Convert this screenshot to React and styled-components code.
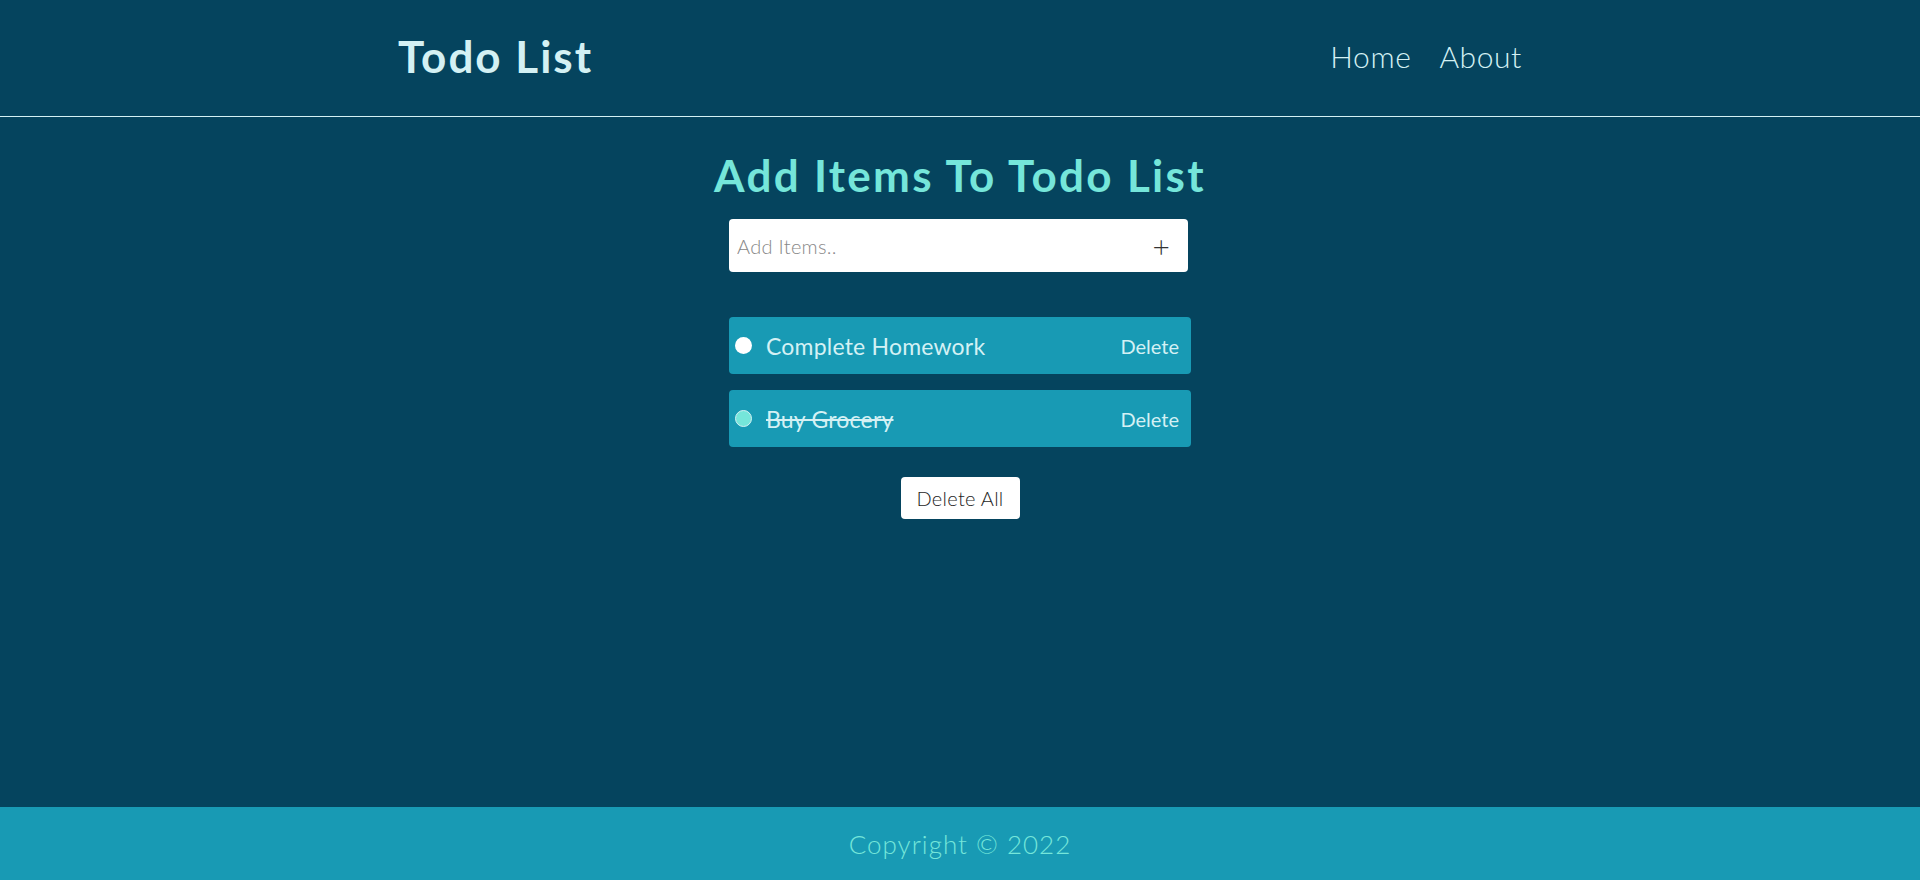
import styled, { createGlobalStyle } from 'styled-components';

const GlobalStyle = createGlobalStyle`
  html, body {
    margin: 0;
    padding: 0;
    background: #05445e;
    font-family: 'Lato', 'Noto Sans', sans-serif;
  }
  * {
    box-sizing: border-box;
  }
`;

const Page = styled.div`
  min-height: 100vh;
  display: flex;
  flex-direction: column;
  background: #05445e;
`;

const Header = styled.header`
  height: 117px;
  border-bottom: 1px solid #d4f1f4;
`;

const Container = styled.div`
  width: 1140px;
  height: 100%;
  margin: 0 auto;
  padding: 0 8px 4px 8px;
  display: flex;
  align-items: center;
  justify-content: space-between;
`;

const Brand = styled.h1`
  margin: 0;
  font-size: 44px;
  font-weight: 700;
  color: #d4f1f4;
  letter-spacing: 2px;
`;

const Nav = styled.nav`
  display: flex;
  gap: 28px;
`;

const NavLink = styled.a`
  font-size: 30px;
  font-weight: 300;
  color: #d4f1f4;
  text-decoration: none;
  letter-spacing: 0.6px;
`;

const Main = styled.main`
  flex: 1;
  display: flex;
  flex-direction: column;
  align-items: center;
  padding-top: 32px;
`;

const Title = styled.h2`
  margin: 0 0 18px;
  font-size: 44px;
  font-weight: 700;
  color: #75e6da;
  letter-spacing: 2.3px;
`;

const InputBox = styled.div`
  width: 459px;
  height: 53px;
  background: #fff;
  border-radius: 4px;
  display: flex;
  align-items: center;
  padding: 0 18px 0 6px;
  margin-left: -3px;
`;

const Input = styled.input`
  flex: 1;
  border: none;
  outline: none;
  font-family: inherit;
  font-size: 20px;
  font-weight: 300;
  color: #333;
  letter-spacing: 0.3px;
  &::placeholder {
    color: #888;
  }
`;

const AddButton = styled.button`
  border: none;
  background: none;
  padding: 0;
  font-family: inherit;
  font-size: 30px;
  font-weight: 300;
  color: #333;
  line-height: 1;
`;

const List = styled.ul`
  list-style: none;
  margin: 45px 0 0;
  padding: 0;
  display: flex;
  flex-direction: column;
  gap: 16px;
`;

const Item = styled.li`
  width: 462px;
  height: 57px;
  background: #189ab4;
  border-radius: 4px;
  display: flex;
  align-items: center;
  padding: 0 12px 0 6px;
`;

const Dot = styled.span`
  width: 17px;
  height: 17px;
  border-radius: 50%;
  background: ${(p) => (p.$done ? '#75e6da' : '#fff')};
  border: ${(p) => (p.$done ? '1px solid #d4f1f4' : 'none')};
  margin-right: 14px;
`;

const ItemText = styled.span`
  flex: 1;
  font-size: 23px;
  font-weight: 400;
  color: #d4f1f4;
  letter-spacing: 0.2px;
  text-decoration: ${(p) => (p.$done ? 'line-through' : 'none')};
`;

const DeleteLink = styled.span`
  font-size: 20px;
  color: #d4f1f4;
`;

const DeleteAll = styled.button`
  margin-top: 30px;
  width: 119px;
  height: 42px;
  border: none;
  border-radius: 4px;
  background: #fff;
  font-family: inherit;
  font-size: 20px;
  font-weight: 300;
  color: #1e1e1e;
  letter-spacing: 0.3px;
`;

const Footer = styled.footer`
  height: 73px;
  background: #189ab4;
  display: flex;
  align-items: center;
  justify-content: center;
  font-size: 26px;
  font-weight: 300;
  color: #75e6da;
  letter-spacing: 1px;
`;

const items = [
  { text: 'Complete Homework', done: false },
  { text: 'Buy Grocery', done: true },
];

const App = () => {
  return (
    <Page>
      <GlobalStyle />
      <Header>
        <Container>
          <Brand>Todo List</Brand>
          <Nav>
            <NavLink href="#">Home</NavLink>
            <NavLink href="#">About</NavLink>
          </Nav>
        </Container>
      </Header>
      <Main>
        <Title>Add Items To Todo List</Title>
        <InputBox>
          <Input placeholder="Add Items.." />
          <AddButton>+</AddButton>
        </InputBox>
        <List>
          {items.map((item) => (
            <Item key={item.text}>
              <Dot $done={item.done} />
              <ItemText $done={item.done}>{item.text}</ItemText>
              <DeleteLink>Delete</DeleteLink>
            </Item>
          ))}
        </List>
        <DeleteAll>Delete All</DeleteAll>
      </Main>
      <Footer>Copyright © 2022</Footer>
    </Page>
  );
};

export default App;
